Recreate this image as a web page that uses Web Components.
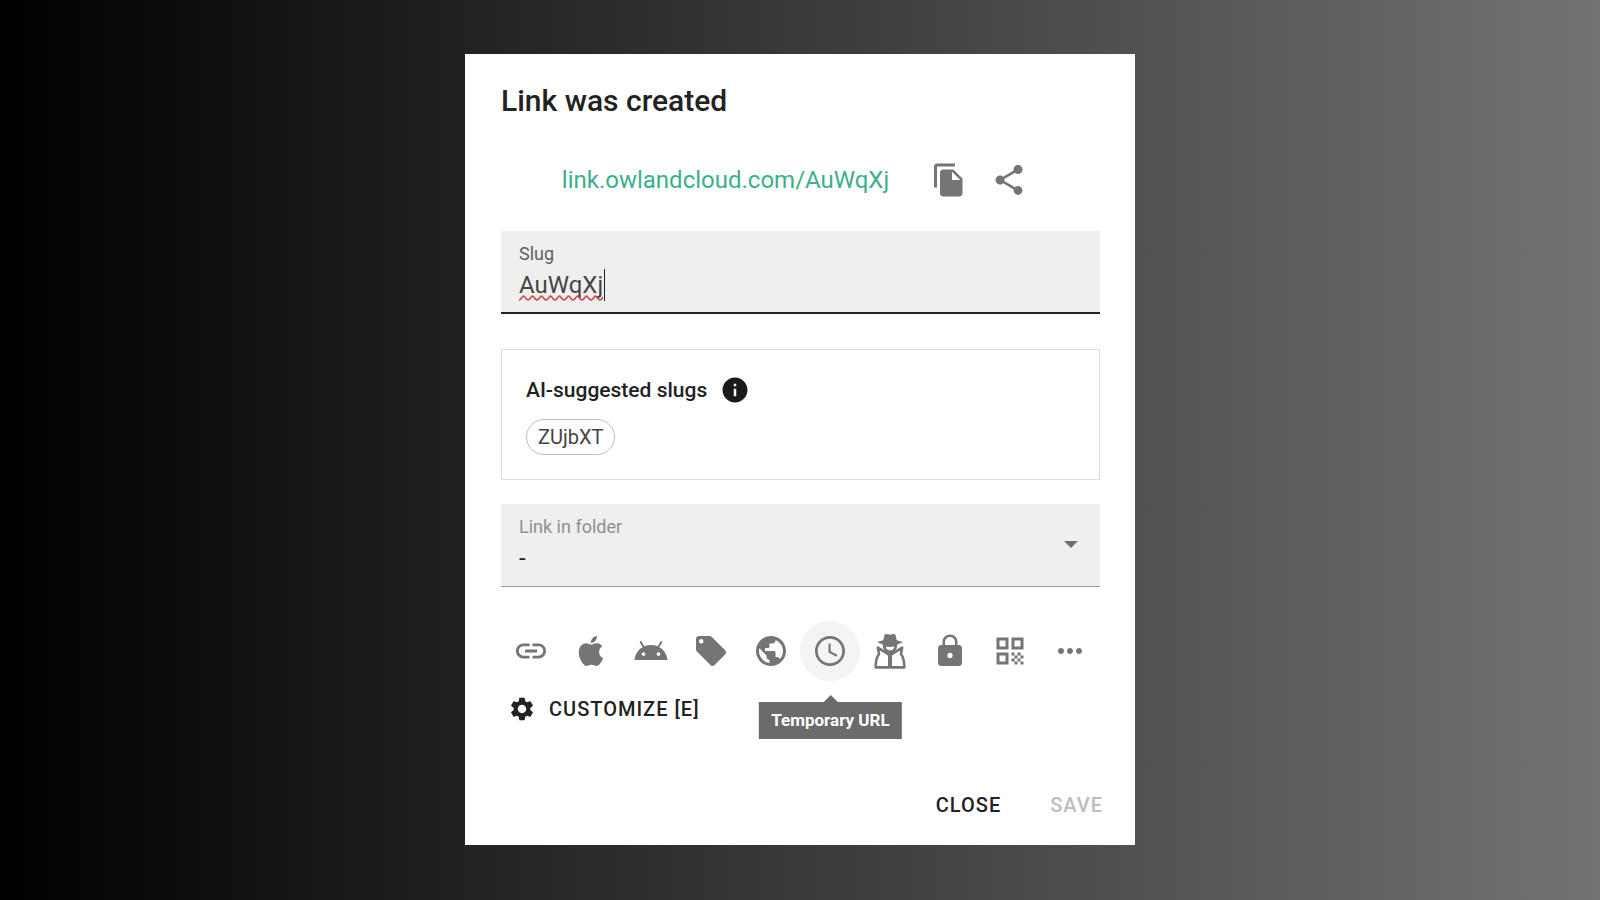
<!DOCTYPE html>
<html lang="en">
<head>
<meta charset="utf-8">
<title>Link was created</title>
<style>
  body {
    box-sizing: border-box;
    margin: 0;
    padding-bottom: 2px;
    min-height: 100vh;
    display: grid;
    justify-items: center;
    align-items: center;
    background: linear-gradient(90deg, #000, #737373);
    font-family: Roboto, "Open Sans", sans-serif;
    color: #222;
  }
</style>
</head>
<body>
<link-dialog heading="Link was created">
  <short-link href="#">link.owlandcloud.com/AuWqXj</short-link>
  <slug-field label="Slug" value="AuWqXj"></slug-field>
  <slug-suggestions heading="AI-suggested slugs">
    <slug-chip>ZUjbXT</slug-chip>
  </slug-suggestions>
  <folder-select label="Link in folder"></folder-select>
  <link-tools></link-tools>
  <text-button slot="actions">Close</text-button>
  <text-button slot="actions" disabled>Save</text-button>
</link-dialog>

<script>
const icons = {
  copy: '<path d="M16 1H4c-1.1 0-2 .9-2 2v14h2V3h12V1zm-1 4 6 6v10c0 1.100-.9 2-2 2H7.990C6.890 23 6 22.100 6 21l.010-14c0-1.100.890-2 1.990-2h7zm-1 7h5.500L14 6.500V12z"/>',
  share: '<path d="M18 16.080c-.76 0-1.440.3-1.960.77L8.910 12.700c.05-.23.09-.46.09-.7s-.04-.47-.09-.7l7.050-4.110c.54.5 1.250.81 2.040.81 1.660 0 3-1.340 3-3s-1.340-3-3-3-3 1.340-3 3c0 .24.04.47.09.7L8.040 9.810C7.500 9.310 6.790 9 6 9c-1.660 0-3 1.340-3 3s1.340 3 3 3c.79 0 1.500-.31 2.040-.81l7.120 4.160c-.05.21-.08.43-.08.65 0 1.610 1.310 2.920 2.920 2.920s2.920-1.310 2.920-2.920-1.310-2.920-2.920-2.920z"/>',
  info: '<path d="M12 2C6.480 2 2 6.480 2 12s4.480 10 10 10 10-4.480 10-10S17.520 2 12 2zm1 15h-2v-6h2v6zm0-8h-2V7h2v2z"/>',
  link: '<path d="M3.900 12c0-1.710 1.390-3.100 3.100-3.100h4V7H7c-2.760 0-5 2.240-5 5s2.240 5 5 5h4v-1.900H7c-1.710 0-3.100-1.390-3.100-3.100zM8 13h8v-2H8v2zm9-6h-4v1.900h4c1.710 0 3.100 1.390 3.100 3.100s-1.390 3.100-3.100 3.100h-4V17h4c2.760 0 5-2.240 5-5s-2.240-5-5-5z"/>',
  apple: '<path d="M18.71 19.500C17.880 20.740 17 21.950 15.660 21.970C14.320 22 13.890 21.180 12.370 21.180C10.840 21.180 10.370 21.950 9.100 22C7.790 22.050 6.800 20.680 5.960 19.470C4.250 17 2.940 12.450 4.700 9.390C5.570 7.870 7.130 6.910 8.820 6.880C10.100 6.860 11.320 7.750 12.110 7.750C12.890 7.750 14.370 6.680 15.920 6.840C16.570 6.870 18.390 7.100 19.560 8.820C19.470 8.880 17.390 10.100 17.410 12.630C17.440 15.650 20.060 16.660 20.090 16.670C20.060 16.740 19.670 18.110 18.710 19.500M13 3.500C13.730 2.670 14.940 2.040 15.940 2C16.070 3.170 15.600 4.350 14.900 5.190C14.210 6.040 13.070 6.700 11.950 6.610C11.800 5.460 12.360 4.260 13 3.500Z"/>',
  android: '<path d="M17.600 9.480l1.840-3.180c.16-.31.04-.69-.26-.85-.29-.15-.65-.06-.83.22l-1.880 3.240c-2.860-1.210-6.080-1.210-8.940 0L5.650 5.670c-.19-.29-.58-.38-.87-.2-.28.18-.37.54-.22.83L6.400 9.480C3.300 11.250 1.280 14.440 1 18h22c-.28-3.560-2.300-6.750-5.400-8.520zM7 15.250c-.69 0-1.250-.56-1.250-1.250s.56-1.250 1.250-1.250 1.250.56 1.250 1.250-.56 1.250-1.250 1.250zm10 0c-.69 0-1.250-.56-1.250-1.250s.56-1.250 1.250-1.250 1.250.56 1.250 1.250-.56 1.250-1.250 1.250z"/>',
  tag: '<path d="M5.500 7A1.500 1.500 0 0 1 4 5.500 1.500 1.500 0 0 1 5.500 4 1.500 1.500 0 0 1 7 5.500 1.500 1.500 0 0 1 5.500 7M21.410 11.580l-9-9C12.050 2.220 11.550 2 11 2H4C2.890 2 2 2.890 2 4v7c0 .55.22 1.050.59 1.410l9 9c.36.36.86.59 1.410.59s1.050-.23 1.410-.59l7-7c.37-.36.59-.86.59-1.410 0-.56-.23-1.060-.59-1.420z"/>',
  globe: '<path d="M12 2C6.480 2 2 6.480 2 12s4.480 10 10 10 10-4.480 10-10S17.520 2 12 2zm-1 17.930c-3.950-.49-7-3.850-7-7.930 0-.62.08-1.210.21-1.790L9 15v1c0 1.100.9 2 2 2v1.930zm6.900-2.540c-.26-.81-1-1.390-1.900-1.390h-1v-3c0-.55-.45-1-1-1H8v-2h2c.55 0 1-.45 1-1V7h2c1.100 0 2-.9 2-2v-.41c2.930 1.190 5 4.060 5 7.410 0 2.080-.8 3.970-2.100 5.390z"/>',
  clock: '<path d="M12 2C6.480 2 2 6.480 2 12s4.480 10 10 10 10-4.480 10-10S17.520 2 12 2zm0 18.200c-4.530 0-8.200-3.670-8.200-8.200S7.470 3.800 12 3.800s8.200 3.670 8.200 8.200-3.670 8.200-8.200 8.200zM12.400 7H11v6l5.200 2.800.750-1.250-4.550-2.400z"/>',
  spy: '<path d="M3.900 9.800 4.700 14Q2.600 16.500 2.400 22.900H11.500V14.600L3.900 9.800zM20.100 9.800 19.300 14Q21.400 16.500 21.600 22.900H12.500V14.600L20.100 9.800z" fill="none" stroke="currentColor" stroke-width="1.700" stroke-linejoin="round"/><path d="M5.600 5.300 7.500 4.900 8.300 1.500Q8.700.4 9.700.7L12 1.200l2.300-.5q1-.3 1.400.8l.8 3.400 1.900.4 1.500.5q.5.400-.1.700l-3 1.100q.1 2.500-1.100 4.100L12 15l-3.700-3.300Q7.100 10.100 7.200 7.600l-3-1.100q-.6-.3-.1-.7z"/><path d="M9 9.100h2.200l.8.400.8-.4H15l-.9 1.800-2.100.8-2.100-.8z" fill="#fff"/>',
  lock: '<path d="M18 8h-1V6c0-2.760-2.240-5-5-5S7 3.240 7 6v2H6c-1.100 0-2 .9-2 2v10c0 1.100.9 2 2 2h12c1.100 0 2-.9 2-2V10c0-1.100-.9-2-2-2zm-6 8.800c-1 0-1.800-.8-1.800-1.800s.8-1.800 1.800-1.800 1.800.8 1.800 1.800-.8 1.800-1.800 1.800zM8.700 8V6c0-1.820 1.480-3.300 3.300-3.300s3.300 1.480 3.300 3.300v2z"/>',
  qr: '<path d="M3 11h8V3H3v8zm2-6h4v4H5V5zM3 21h8v-8H3v8zm2-6h4v4H5v-4zM13 3v8h8V3h-8zm6 6h-4V5h4v4zM19 19h2v2h-2zM13 13h2v2h-2zM15 15h2v2h-2zM13 17h2v2h-2zM15 19h2v2h-2zM17 17h2v2h-2zM17 13h2v2h-2zM19 15h2v2h-2z"/>',
  more: '<path d="M6 10c-1.100 0-2 .9-2 2s.9 2 2 2 2-.9 2-2-.9-2-2-2zm12 0c-1.100 0-2 .9-2 2s.9 2 2 2 2-.9 2-2-.9-2-2-2zm-6 0c-1.100 0-2 .9-2 2s.9 2 2 2 2-.9 2-2-.9-2-2-2z"/>',
  gear: '<path d="M19.140 12.940c.04-.3.06-.61.06-.94 0-.32-.02-.64-.07-.94l2.030-1.580c.18-.14.23-.41.12-.61l-1.920-3.320c-.12-.22-.37-.29-.59-.22l-2.390.96c-.5-.38-1.030-.7-1.620-.94l-.36-2.540c-.04-.24-.24-.41-.48-.41h-3.840c-.24 0-.43.17-.47.41l-.36 2.540c-.59.24-1.130.57-1.620.94l-2.390-.96c-.22-.08-.47 0-.59.22L2.740 8.870c-.12.21-.08.47.12.61l2.030 1.580c-.05.3-.09.63-.09.94s.02.64.07.94l-2.030 1.580c-.18.14-.23.41-.12.61l1.920 3.320c.12.22.37.29.59.22l2.390-.96c.5.38 1.030.7 1.620.94l.36 2.540c.05.24.24.41.48.41h3.840c.24 0 .44-.17.47-.41l.36-2.540c.59-.24 1.130-.56 1.620-.94l2.390.96c.22.08.47 0 .59-.22l1.920-3.320c.12-.22.07-.47-.12-.61l-2.010-1.580zM12 15.600c-1.980 0-3.600-1.620-3.600-3.600s1.620-3.600 3.600-3.600 3.600 1.620 3.600 3.600-1.620 3.600-3.600 3.600z"/>'
}

// shared by every element: clones the markup into an open shadow root
class BaseElement extends HTMLElement {
  constructor() {
    super()
    const template = document.createElement('template')
    template.innerHTML = this.render()
    this.attachShadow({ mode: 'open' }).appendChild(template.content.cloneNode(true))
  }

  attr(name) {
    return this.getAttribute(name) || ''
  }
}

customElements.define('ui-icon', class extends BaseElement {
  render() {
    return `
      <style>
      :host {
        display: block;
        width: 36px;
        height: 36px;
      }
      svg {
        display: block;
        width: 100%;
        height: 100%;
        fill: currentColor;
        overflow: visible;
      }
      </style>
      <svg viewBox="0 0 24 24" aria-hidden="true">${icons[this.attr('name')]}</svg>
    `
  }
})

customElements.define('icon-button', class extends BaseElement {
  render() {
    return `
      <style>
      :host {
        display: block;
        color: #757575;
      }
      button {
        display: grid;
        place-items: center;
        width: 60px;
        height: 60px;
        padding: 0;
        border: 0;
        border-radius: 50%;
        background: none;
        color: inherit;
        cursor: pointer;
      }
      button:hover,
      :host([active]) button {
        background: #f4f4f4;
      }
      </style>
      <button type="button" aria-label="${this.attr('label')}">
        <ui-icon name="${this.attr('icon')}"></ui-icon>
      </button>
    `
  }
})

customElements.define('tool-tip', class extends BaseElement {
  render() {
    return `
      <style>
      :host {
        display: block;
        padding: 0 12px;
        background: #6b6b6b;
        color: #fff;
        font-size: 17px;
        font-weight: 700;
        line-height: 37px;
        white-space: nowrap;
      }
      :host::before {
        content: "";
        position: absolute;
        bottom: 100%;
        left: 50%;
        margin-left: -7px;
        border: 7px solid transparent;
        border-top: 0;
        border-bottom-color: #6b6b6b;
      }
      </style>
      <slot></slot>
    `
  }
})

customElements.define('short-link', class extends BaseElement {
  render() {
    return `
      <style>
      :host {
        display: flex;
        align-items: center;
        justify-content: center;
        margin-bottom: 21px;
      }
      a {
        margin-right: 30px;
        color: #3bb08a;
        font-size: 24px;
        line-height: 32px;
        text-decoration: none;
      }
      </style>
      <a href="${this.attr('href')}"><slot></slot></a>
      <icon-button icon="copy" label="Copy link"></icon-button>
      <icon-button icon="share" label="Share link"></icon-button>
    `
  }
})

customElements.define('slug-field', class extends BaseElement {
  render() {
    return `
      <style>
      :host {
        display: block;
        margin-bottom: 35px;
        padding: 12px 18px 11px;
        background: #efefef;
        border-bottom: 2px solid #222;
      }
      label {
        display: block;
        color: #5f5f5f;
        font-size: 18px;
        line-height: 22px;
      }
      .value {
        position: relative;
        display: flex;
        width: fit-content;
        margin-top: 4px;
      }
      input {
        field-sizing: content;
        height: 32px;
        margin: 0;
        padding: 0 1px 0 0;
        border: 0;
        border-right: 1px solid #222;
        outline: none;
        background: none;
        color: #444;
        font: 24px/32px Roboto, sans-serif;
      }
      /* spell check squiggle */
      .value::after {
        content: "";
        position: absolute;
        left: 0;
        right: 2px;
        bottom: 0;
        height: 6px;
        background: url("data:image/svg+xml,%3Csvg xmlns='http://www.w3.org/2000/svg' width='9' height='6'%3E%3Cpath d='M-1 4L0 5Q1 5 2.500 3T4.500 1Q5 1 6.500 3T9 5L10 4' fill='none' stroke='%23d04545' stroke-width='1.600'/%3E%3C/svg%3E");
      }
      </style>
      <label for="slug">${this.attr('label')}</label>
      <div class="value">
        <input id="slug" type="text" value="${this.attr('value')}" spellcheck="false">
      </div>
    `
  }
})

customElements.define('slug-chip', class extends BaseElement {
  render() {
    return `
      <style>
      :host {
        display: block;
      }
      button {
        height: 36px;
        padding: 0 11px;
        border: 1px solid #bdbdbd;
        border-radius: 18px;
        background: #fff;
        color: #444;
        font: 20px/32px Roboto, sans-serif;
        cursor: pointer;
      }
      </style>
      <button type="button"><slot></slot></button>
    `
  }
})

customElements.define('slug-suggestions', class extends BaseElement {
  render() {
    return `
      <style>
      :host {
        display: block;
        margin-bottom: 24px;
        padding: 24px;
        border: 1px solid #dedede;
      }
      .heading {
        display: flex;
        align-items: center;
        gap: 13px;
        margin-bottom: 13px;
      }
      h3 {
        margin: 0;
        font-size: 21px;
        font-weight: 500;
        line-height: 32px;
      }
      ui-icon {
        width: 30px;
        height: 30px;
        color: #1a1a1a;
      }
      .chips {
        display: flex;
        flex-wrap: wrap;
        gap: 12px;
      }
      </style>
      <div class="heading">
        <h3>${this.attr('heading')}</h3>
        <ui-icon name="info"></ui-icon>
      </div>
      <div class="chips"><slot></slot></div>
    `
  }
})

customElements.define('folder-select', class extends BaseElement {
  render() {
    return `
      <style>
      :host {
        display: grid;
        margin-bottom: 34px;
        background: #efefef;
        border-bottom: 1px solid #9a9a9a;
      }
      label, select, .arrow {
        grid-area: 1 / 1;
      }
      label {
        padding: 12px 18px 0;
        color: #8f8f8f;
        font-size: 18px;
        line-height: 22px;
        pointer-events: none;
        z-index: 1;
      }
      select {
        appearance: none;
        width: 100%;
        height: 82px;
        margin: 0;
        padding: 26px 18px 0;
        border: 0;
        outline: none;
        background: none;
        color: #222;
        font: 24px/32px Roboto, sans-serif;
      }
      .arrow {
        justify-self: end;
        align-self: center;
        margin-right: 22px;
        border: 7px solid transparent;
        border-top-color: #6f6f6f;
        border-bottom: 0;
        pointer-events: none;
      }
      </style>
      <label for="folder">${this.attr('label')}</label>
      <select id="folder"><option>-</option></select>
      <span class="arrow"></span>
    `
  }
})

customElements.define('link-tools', class extends BaseElement {
  render() {
    return `
      <style>
      :host {
        display: block;
      }
      .tools {
        display: grid;
        grid-template-columns: repeat(10, minmax(0, 1fr));
        justify-items: center;
      }
      .hint {
        position: relative;
      }
      tool-tip {
        position: absolute;
        top: 81px;
        left: 50%;
        transform: translateX(-50%);
        z-index: 1;
      }
      .customize {
        display: flex;
        align-items: center;
        gap: 13px;
        height: 56px;
        padding: 0 7px;
        border: 0;
        background: none;
        color: #222;
        font: 500 20px/32px Roboto, sans-serif;
        letter-spacing: 1px;
        text-transform: uppercase;
        cursor: pointer;
      }
      .customize ui-icon {
        width: 28px;
        height: 28px;
      }
      </style>
      <div class="tools">
        <icon-button icon="link" label="Link"></icon-button>
        <icon-button icon="apple" label="iOS"></icon-button>
        <icon-button icon="android" label="Android"></icon-button>
        <icon-button icon="tag" label="Tags"></icon-button>
        <icon-button icon="globe" label="Geo"></icon-button>
        <div class="hint">
          <icon-button icon="clock" label="Temporary URL" active></icon-button>
          <tool-tip>Temporary URL</tool-tip>
        </div>
        <icon-button icon="spy" label="Cloaking"></icon-button>
        <icon-button icon="lock" label="Password"></icon-button>
        <icon-button icon="qr" label="QR code"></icon-button>
        <icon-button icon="more" label="More"></icon-button>
      </div>
      <button class="customize" type="button">
        <ui-icon name="gear"></ui-icon>
        Customize [E]
      </button>
    `
  }
})

customElements.define('text-button', class extends BaseElement {
  render() {
    return `
      <style>
      :host {
        display: block;
      }
      button {
        height: 54px;
        padding: 0 12px;
        border: 0;
        background: none;
        color: #222;
        font: 500 20px/32px Roboto, sans-serif;
        letter-spacing: 1px;
        text-transform: uppercase;
        cursor: pointer;
      }
      button:disabled {
        color: #bdbdbd;
        cursor: default;
      }
      </style>
      <button type="button" ${this.hasAttribute('disabled') ? 'disabled' : ''}><slot></slot></button>
    `
  }
})

customElements.define('link-dialog', class extends BaseElement {
  render() {
    return `
      <style>
      :host {
        display: block;
        box-sizing: border-box;
        width: 100%;
        max-width: 670px;
        padding: 27px 35px 13px 36px;
        background: #fff;
      }
      h2 {
        margin: 0 0 29px;
        font-size: 30px;
        font-weight: 500;
        line-height: 40px;
      }
      footer {
        display: flex;
        justify-content: flex-end;
        gap: 25px;
        margin-top: 41px;
        margin-right: -15px;
      }
      </style>
      <section role="dialog" aria-labelledby="heading">
        <h2 id="heading">${this.attr('heading')}</h2>
        <slot></slot>
        <footer><slot name="actions"></slot></footer>
      </section>
    `
  }
})
</script>
</body>
</html>
